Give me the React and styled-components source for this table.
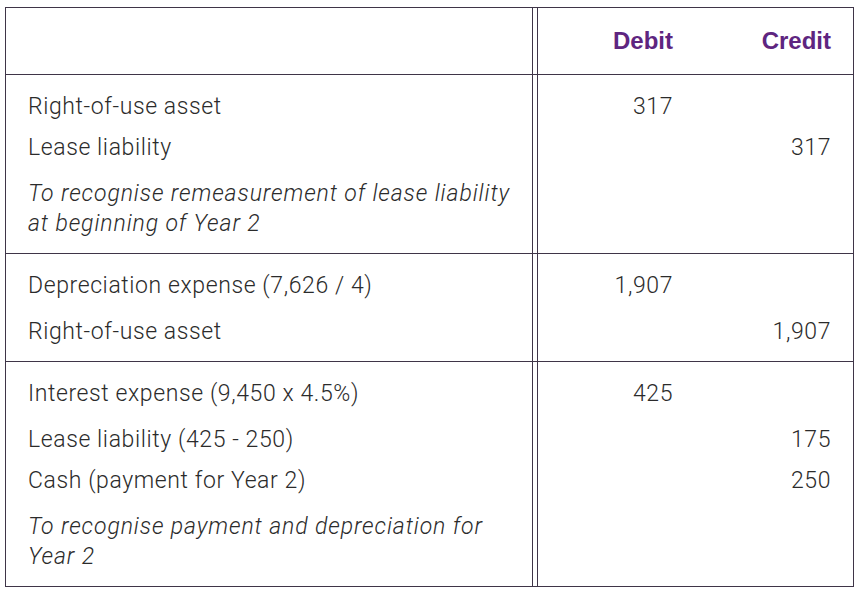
import React from "react";
import styled, { createGlobalStyle } from "styled-components";

const GlobalStyle = createGlobalStyle`
  html, body {
    margin: 0;
    padding: 0;
    background: #fff;
  }
  body {
    font-family: Roboto, "Liberation Sans", Arial, sans-serif;
    color: #2b2b2b;
  }
`;

const sections = [
  {
    lines: [
      { label: "Right-of-use asset", debit: "317" },
      { label: "Lease liability", credit: "317", gap: 11 },
      {
        label: "To recognise remeasurement of lease liability at beginning of Year 2",
        note: true,
        gap: 16,
      },
    ],
  },
  {
    lines: [
      { label: "Depreciation expense (7,626 / 4)", debit: "1,907" },
      { label: "Right-of-use asset", credit: "1,907", gap: 16 },
    ],
  },
  {
    lines: [
      { label: "Interest expense (9,450 x 4.5%)", debit: "425" },
      { label: "Lease liability (425 - 250)", credit: "175", gap: 16 },
      { label: "Cash (payment for Year 2)", credit: "250", gap: 11 },
      {
        label: "To recognise payment and depreciation for Year 2",
        note: true,
        gap: 16,
      },
    ],
  },
];

function App() {
  return (
    <>
      <GlobalStyle />
      <Page>
        <Table>
          <Row>
            <LabelCell />
            <AmountCell $first>
              <Heading>Debit</Heading>
            </AmountCell>
            <AmountCell>
              <Heading>Credit</Heading>
            </AmountCell>
          </Row>
          {sections.map((s, i) => (
            <Row key={i} $body>
              <LabelCell $body>
                {s.lines.map((l, j) =>
                  l.note ? (
                    <Note key={j} $gap={l.gap}>
                      {l.label}
                    </Note>
                  ) : (
                    <Line key={j} $gap={l.gap}>
                      {l.label}
                    </Line>
                  )
                )}
              </LabelCell>
              <AmountCell $first $body>
                {s.lines.map((l, j) => (
                  <Line key={j} $gap={l.gap}>
                    {l.debit || ""}
                  </Line>
                ))}
              </AmountCell>
              <AmountCell $body>
                {s.lines.map((l, j) => (
                  <Line key={j} $gap={l.gap}>
                    {l.credit || ""}
                  </Line>
                ))}
              </AmountCell>
            </Row>
          ))}
        </Table>
      </Page>
    </>
  );
}

const Page = styled.div`
  padding: 7px 5px;
`;

const Table = styled.div`
  width: 849px;
  border: 1px solid #3f3548;
  box-sizing: border-box;
`;

const Row = styled.div`
  display: grid;
  grid-template-columns: 531px 158px 158px;
  border-bottom: 1px solid #3f3548;
  min-height: ${(p) => (p.$body ? "auto" : "66px")};
  &:last-child {
    border-bottom: none;
  }
`;

const LabelCell = styled.div`
  margin-right: 4px;
  border-right: 1px solid #3f3548;
  padding: ${(p) => (p.$body ? "17px 14px 14px 22px" : "0")};
`;

const AmountCell = styled.div`
  border-left: ${(p) => (p.$first ? "1px solid #3f3548" : "none")};
  padding: ${(p) => (p.$body ? "17px 22px 14px 0" : "0 22px 0 0")};
  display: flex;
  flex-direction: column;
  align-items: flex-end;
  justify-content: ${(p) => (p.$body ? "flex-start" : "center")};
`;

const Heading = styled.div`
  font-family: "Liberation Sans", Arial, sans-serif;
  font-size: 24px;
  font-weight: 700;
  color: #5e2580;
`;

const Line = styled.div`
  font-size: 23px;
  font-weight: 300;
  letter-spacing: 0.6px;
  line-height: 30px;
  height: 30px;
  margin-top: ${(p) => (p.$gap ? p.$gap : 0)}px;
  white-space: nowrap;
`;

const Note = styled.div`
  font-size: 23px;
  font-weight: 300;
  font-style: italic;
  letter-spacing: 0.9px;
  line-height: 30px;
  margin-top: ${(p) => (p.$gap ? p.$gap : 0)}px;
`;

export default App;
